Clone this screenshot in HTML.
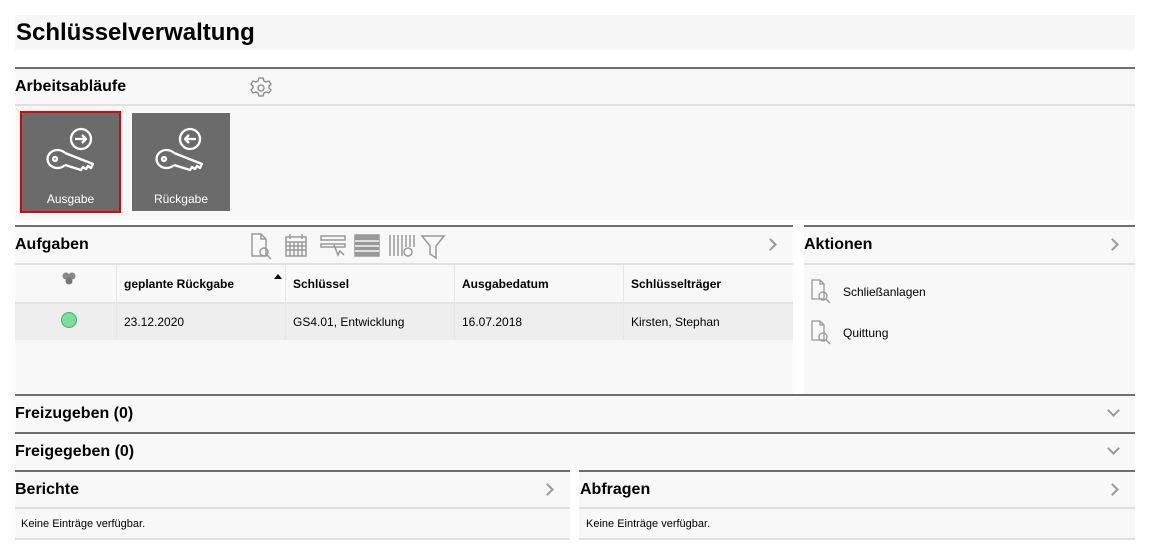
<!DOCTYPE html>
<html><head><meta charset="utf-8"><style>
*{box-sizing:border-box;margin:0;padding:0}
body{width:1154px;height:545px;background:#fff;font-family:"Liberation Sans",Arial,sans-serif;position:relative;overflow:hidden;color:#000}
.a{position:absolute}
.hd{font-weight:bold;font-size:16px}
.chev{position:absolute;width:9px;height:9px;border-top:2px solid #999;border-right:2px solid #999;transform:rotate(45deg)}
.chevd{position:absolute;width:9px;height:9px;border-bottom:2px solid #999;border-right:2px solid #999;transform:rotate(45deg)}
.th{position:absolute;top:277px;font-size:12px;font-weight:bold}
.td{position:absolute;top:315px;font-size:12px}
.sep{position:absolute;width:1px;background:#e6e6e6}
</style></head><body>
<div class="a" style="left:15px;top:15px;width:1120px;height:35px;background:#f7f7f7"></div>
<div class="a" style="left:16px;top:19px;font-size:24px;font-weight:bold">Schlüsselverwaltung</div>

<div class="a" style="left:15px;top:67px;width:1120px;height:153px;background:#f8f8f8;border-top:2px solid #6e6e6e"></div>
<div class="a hd" style="left:15px;top:78px">Arbeitsabläufe</div>
<svg class="a" style="left:248px;top:76px" width="26" height="24" viewBox="0 0 26 24"><path d="M11 2h4l1 3 2 1 3-1 2 3-2 2v2l2 2-2 3-3-1-2 1-1 3h-4l-1-3-2-1-3 1-2-3 2-2v-2l-2-2 2-3 3 1 2-1z" fill="none" stroke="#888" stroke-width="1.3"/><circle cx="13" cy="12" r="3" fill="none" stroke="#888" stroke-width="1.3"/></svg>
<div class="a" style="left:15px;top:104px;width:1120px;height:2px;background:#e0e0e0"></div>

<div class="a" style="left:20px;top:111px;width:101px;height:102px;background:#6b6b6b;border:2px solid #e00000"></div>
<div class="a" style="left:132px;top:113px;width:98px;height:98px;background:#6b6b6b"></div>
<svg class="a" style="left:46px;top:126px" width="50" height="50" viewBox="0 0 50 50"><g fill="none" stroke="#fff" stroke-width="2.3" stroke-linejoin="round"><circle cx="35" cy="13" r="10"/><path d="M29 13h11M36 9l4 4-4 4"/><path d="M19 27A10 9 0 1 0 19 39M19 27L47 38 45 42 42 40 40 43 37 41 35 44 19 39"/><circle cx="9" cy="33" r="2"/></g></svg>
<svg class="a" style="left:155px;top:126px" width="50" height="50" viewBox="0 0 50 50"><g fill="none" stroke="#fff" stroke-width="2.3" stroke-linejoin="round"><circle cx="35" cy="13" r="10"/><path d="M30 13h11M34 9l-4 4 4 4"/><path d="M19 27A10 9 0 1 0 19 39M19 27L47 38 45 42 42 40 40 43 37 41 35 44 19 39"/><circle cx="9" cy="33" r="2"/></g></svg>
<div class="a" style="left:20px;top:192px;width:101px;text-align:center;color:#fff;font-size:12px">Ausgabe</div>
<div class="a" style="left:132px;top:192px;width:98px;text-align:center;color:#fff;font-size:12px">Rückgabe</div>

<!-- Aufgaben -->
<div class="a" style="left:15px;top:225px;width:778px;height:169px;background:#f8f8f8;border-top:2px solid #6e6e6e"></div>
<div class="a hd" style="left:15px;top:236px">Aufgaben</div>
<svg class="a" style="left:250px;top:232px" width="200" height="28" viewBox="0 0 200 28" fill="none" stroke="#999" stroke-width="1.5">
<path d="M2 2h9l5 5v17H2zM11 2v5h5"/><circle cx="14" cy="20" r="4"/><path d="M17 23l4 4"/>
<rect x="36" y="5" width="20" height="19"/><path d="M36 10h20M40 2v5M52 2v5M36 14h20M36 18h20M40 10v14M44 10v14M48 10v14M52 10v14"/>
<path d="M71 4h24v4H71zM71 12h24v3H71z"/><path d="M84 13l4 10 2-4 4 4" />
<rect x="105" y="3" width="24" height="21" fill="#999"/><path d="M105 9h24M105 14h24M105 19h24" stroke="#f8f8f8"/>
<path d="M140 3v21M144 3v21M148 3v21M152 3v21M156 3v12M160 3v12M164 3v12"/><circle cx="158" cy="20" r="4"/>
<path d="M172 4h22l-8 10v12l-6-4v-8z"/></svg>
<div class="chev" style="left:766px;top:240px"></div>
<div class="a" style="left:15px;top:263px;width:778px;height:2px;background:#e0e0e0"></div>
<div class="a" style="left:15px;top:302px;width:778px;height:2px;background:#e4e4e4"></div>
<div class="a" style="left:15px;top:304px;width:778px;height:36px;background:#eee"></div>
<div class="sep" style="left:116px;top:265px;height:75px"></div>
<div class="sep" style="left:285px;top:265px;height:75px"></div>
<div class="sep" style="left:454px;top:265px;height:75px"></div>
<div class="sep" style="left:623px;top:265px;height:75px"></div>
<svg class="a" style="left:61px;top:271px" width="16" height="16"><circle cx="5" cy="5" r="3.5" fill="#888"/><circle cx="11" cy="5" r="3.5" fill="#888"/><circle cx="8" cy="10" r="3.5" fill="#777"/></svg>
<div class="a" style="left:274px;top:274px;width:0;height:0;border-left:4px solid transparent;border-right:4px solid transparent;border-bottom:5px solid #000"></div>
<div class="th" style="left:124px">geplante Rückgabe</div>
<div class="th" style="left:293px">Schlüssel</div>
<div class="th" style="left:462px">Ausgabedatum</div>
<div class="th" style="left:631px">Schlüsselträger</div>
<div class="a" style="left:61px;top:312px;width:16px;height:16px;border-radius:50%;background:#7ddc9f;border:1px solid #3fb36a"></div>
<div class="td" style="left:124px">23.12.2020</div>
<div class="td" style="left:293px">GS4.01, Entwicklung</div>
<div class="td" style="left:462px">16.07.2018</div>
<div class="td" style="left:631px">Kirsten, Stephan</div>

<!-- Aktionen -->
<div class="a" style="left:804px;top:225px;width:331px;height:169px;background:#f8f8f8;border-top:2px solid #6e6e6e"></div>
<div class="a hd" style="left:804px;top:236px">Aktionen</div>
<div class="chev" style="left:1108px;top:240px"></div>
<div class="a" style="left:804px;top:263px;width:331px;height:2px;background:#e0e0e0"></div>
<svg class="a" style="left:810px;top:279px" width="24" height="26" fill="none" stroke="#999" stroke-width="1.3"><path d="M2 1h8l4 4v15H2zM10 1v4h4"/><circle cx="13" cy="17" r="4"/><path d="M16 20l4 4"/></svg>
<svg class="a" style="left:810px;top:320px" width="24" height="26" fill="none" stroke="#999" stroke-width="1.3"><path d="M2 1h8l4 4v15H2zM10 1v4h4"/><circle cx="13" cy="17" r="4"/><path d="M16 20l4 4"/></svg>
<div class="a" style="left:843px;top:285px;font-size:12px">Schließanlagen</div>
<div class="a" style="left:843px;top:326px;font-size:12px">Quittung</div>

<!-- Freizugeben / Freigegeben -->
<div class="a" style="left:15px;top:394px;width:1120px;height:38px;background:#f8f8f8;border-top:2px solid #6e6e6e"></div>
<div class="a hd" style="left:15px;top:405px">Freizugeben (0)</div>
<div class="chevd" style="left:1109px;top:406px"></div>
<div class="a" style="left:15px;top:432px;width:1120px;height:38px;background:#f8f8f8;border-top:2px solid #6e6e6e"></div>
<div class="a hd" style="left:15px;top:443px">Freigegeben (0)</div>
<div class="chevd" style="left:1109px;top:444px"></div>

<!-- Berichte / Abfragen -->
<div class="a" style="left:15px;top:470px;width:555px;height:70px;background:#f8f8f8;border-top:2px solid #6e6e6e;border-bottom:2px solid #e0e0e0"></div>
<div class="a hd" style="left:15px;top:481px">Berichte</div>
<div class="chev" style="left:543px;top:485px"></div>
<div class="a" style="left:15px;top:507px;width:555px;height:2px;background:#e0e0e0"></div>
<div class="a" style="left:21px;top:518px;font-size:11px">Keine Einträge verfügbar.</div>
<div class="a" style="left:579px;top:470px;width:556px;height:70px;background:#f8f8f8;border-top:2px solid #6e6e6e;border-bottom:2px solid #e0e0e0"></div>
<div class="a hd" style="left:580px;top:481px">Abfragen</div>
<div class="chev" style="left:1108px;top:485px"></div>
<div class="a" style="left:579px;top:507px;width:556px;height:2px;background:#e0e0e0"></div>
<div class="a" style="left:586px;top:518px;font-size:11px">Keine Einträge verfügbar.</div>
</body></html>
